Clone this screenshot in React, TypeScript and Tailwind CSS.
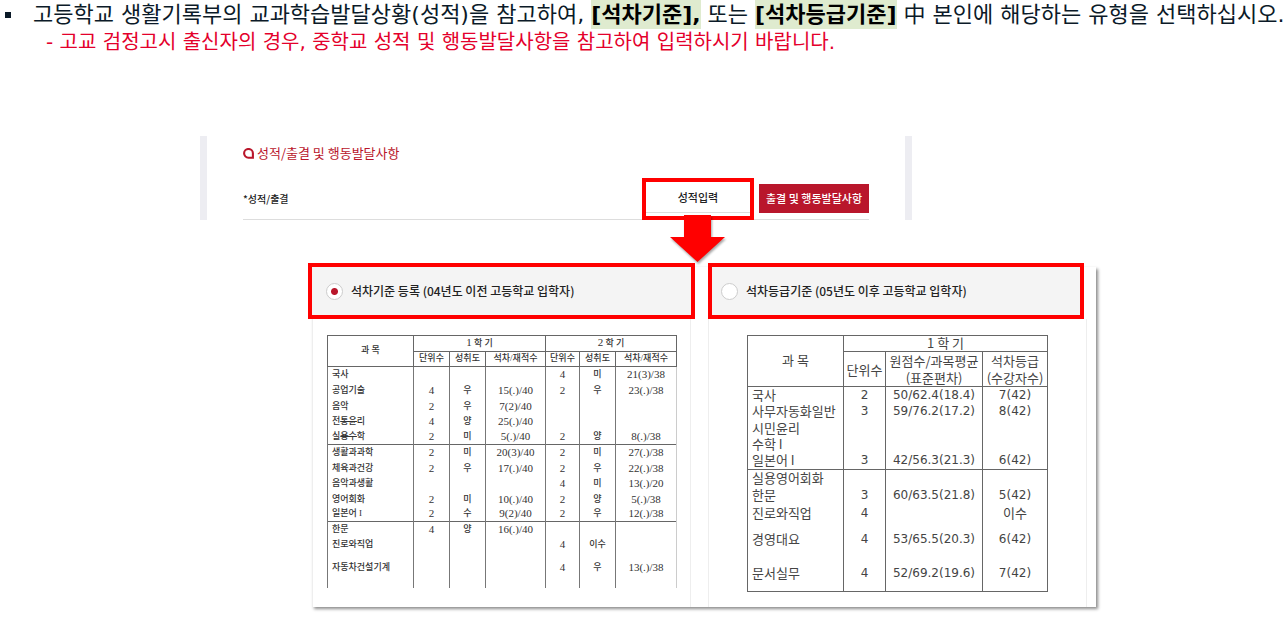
import { useState } from 'react'

type Row = { h: string; cells: string[]; line?: boolean; strike?: boolean }

const rankRows: Row[] = [
  { h: 'h-4', cells: ['국사', '', '', '', '4', '미', '21(3)/38'] },
  { h: 'h-4', cells: ['공업기술', '4', '우', '15(.)/40', '2', '우', '23(.)/38'] },
  { h: 'h-[15px]', cells: ['음악', '2', '우', '7(2)/40', '', '', ''] },
  { h: 'h-4', cells: ['전통윤리', '4', '양', '25(.)/40', '', '', ''], strike: true },
  { h: 'h-[15px]', cells: ['실용수학', '2', '미', '5(.)/40', '2', '양', '8(.)/38'], line: true, strike: true },
  { h: 'h-4', cells: ['생활과과학', '2', '미', '20(3)/40', '2', '미', '27(.)/38'] },
  { h: 'h-[15px]', cells: ['체육과건강', '2', '우', '17(.)/40', '2', '우', '22(.)/38'] },
  { h: 'h-4', cells: ['음악과생활', '', '', '', '4', '미', '13(.)/20'] },
  { h: 'h-[15px]', cells: ['영어회화', '2', '미', '10(.)/40', '2', '양', '5(.)/38'] },
  { h: 'h-[15px]', cells: ['일본어 I', '2', '수', '9(2)/40', '2', '우', '12(.)/38'], line: true },
  { h: 'h-[15px]', cells: ['한문', '4', '양', '16(.)/40', '', '', ''] },
  { h: 'h-4', cells: ['진로와직업', '', '', '', '4', '이수', ''] },
  { h: 'h-[30px]', cells: ['자동차건설기계', '', '', '', '4', '우', '13(.)/38'] },
  { h: 'h-[5px]', cells: ['', '', '', '', '', '', ''] },
]

const gradeRows: Row[] = [
  { h: 'h-[17px]', cells: ['국사', '2', '50/62.4(18.4)', '7(42)'] },
  { h: 'h-4', cells: ['사무자동화일반', '3', '59/76.2(17.2)', '8(42)'] },
  { h: 'h-[17px]', cells: ['시민윤리', '', '', ''] },
  { h: 'h-4', cells: ['수학 I', '', '', ''] },
  { h: 'h-[17px]', cells: ['일본어 I', '3', '42/56.3(21.3)', '6(42)'], line: true },
  { h: 'h-[17px]', cells: ['실용영어회화', '', '', ''] },
  { h: 'h-[17px]', cells: ['한문', '3', '60/63.5(21.8)', '5(42)'] },
  { h: 'h-[19px]', cells: ['진로와직업', '4', '', '이수'] },
  { h: 'h-[34px]', cells: ['경영대요', '4', '53/65.5(20.3)', '6(42)'] },
  { h: 'h-[35px]', cells: ['문서실무', '4', '52/69.2(19.6)', '7(42)'], line: true },
]

// 석차기준 성적표 (1, 2학기)
function RankTable() {
  const th = 'border border-[#666] p-0 pb-px font-medium'
  return (
    <table className="w-full table-fixed border-collapse whitespace-nowrap font-['Liberation_Serif','Noto_Sans_CJK_KR',serif] text-[9px] leading-[13px] font-medium text-[#333]">
      <colgroup>
        <col />
        <col className="w-[36px]" />
        <col className="w-[36px]" />
        <col className="w-[60px]" />
        <col className="w-[34px]" />
        <col className="w-[36px]" />
        <col className="w-[61px]" />
      </colgroup>
      <thead>
        <tr className="h-[15px]">
          <th rowSpan={2} className={th}>과 목</th>
          <th colSpan={3} className={th}><span className="text-[11px]">1</span> 학 기</th>
          <th colSpan={3} className={th}><span className="text-[11px]">2</span> 학 기</th>
        </tr>
        <tr className="h-[15px]">
          <th className={th}>단위수</th>
          <th className={th}>성취도</th>
          <th className={th}>석차/재적수</th>
          <th className={th}>단위수</th>
          <th className={th}>성취도</th>
          <th className={th}>석차/재적수</th>
        </tr>
      </thead>
      <tbody>
        {rankRows.map((row, i) => (
          <tr key={i} className={`${row.h} ${row.line ? 'border-b border-[#666]' : ''}`}>
            {row.cells.map((cell, j) => (
              <td
                key={j}
                className={`border-x border-[#777] p-0 ${j === 0 ? 'pl-1' : 'text-center'} ${/\d/.test(cell) ? 'text-[11px]' : ''} ${j === 6 ? 'border-r-[#ccc]' : ''}`}
              >
                {j === 0 && row.strike ? <>{cell[0]}<s>{cell.slice(1, 3)}</s>{cell[3]}</> : cell}
              </td>
            ))}
          </tr>
        ))}
      </tbody>
    </table>
  )
}

// 석차등급기준 성적표
function GradeTable() {
  const th = 'border border-[#666] p-0 font-normal'
  return (
    <table className="w-full table-fixed border-collapse whitespace-nowrap font-['Noto_Sans_CJK_KR',sans-serif] text-[13px] leading-[13px] text-[#444]">
      <colgroup>
        <col />
        <col className="w-[42px]" />
        <col className="w-[97px]" />
        <col className="w-[65px]" />
      </colgroup>
      <thead>
        <tr className="h-4">
          <th rowSpan={2} className={`${th} pb-1`}>과 목</th>
          <th colSpan={3} className={`${th} pb-0.5`}>1 학 기</th>
        </tr>
        <tr className="h-[35px]">
          <th className={th}>단위수</th>
          <th className={`${th} leading-[17px]`}>원점수/과목평균<br />(표준편차)</th>
          <th className={`${th} leading-[17px]`}>석차등급<br />(수강자수)</th>
        </tr>
      </thead>
      <tbody>
        {gradeRows.map((row) => (
          <tr key={row.cells[0]} className={`${row.h} ${row.line ? 'border-b border-[#666]' : ''}`}>
            {row.cells.map((cell, j) => (
              <td
                key={j}
                className={`border-x border-[#666] p-0 ${j === 0 ? 'pl-1' : 'text-center'} ${/\d/.test(cell) ? "font-['DejaVu_Sans',sans-serif] text-xs leading-[15px]" : 'pb-0.5'}`}
              >
                {cell}
              </td>
            ))}
          </tr>
        ))}
      </tbody>
    </table>
  )
}

interface TypeOptionProps {
  label: string
  checked: boolean
  onSelect: () => void
}

function TypeOption({ label, checked, onSelect }: TypeOptionProps) {
  return (
    <label className="flex h-12 items-center gap-2 bg-[#f4f4f4] text-xs font-medium text-[#222] whitespace-nowrap">
      <input
        type="radio"
        name="gradeType"
        checked={checked}
        onChange={onSelect}
        className="size-[17px] shrink-0 appearance-none rounded-full border border-[#ccc] bg-white checked:bg-[radial-gradient(circle,#b9162b_3px,#fff_4px)]"
      />
      {label}
    </label>
  )
}

export default function App() {
  const [type, setType] = useState('rank')

  return (
    <main className="bg-white font-['Noto_Sans_CJK_KR',sans-serif]">
      {/* 안내 문구 */}
      <header className="whitespace-nowrap font-['DejaVu_Sans','Noto_Sans_CJK_KR',sans-serif]">
        <div className="flex items-center pl-[5px]">
          <span className="mr-[22px] size-[6px] shrink-0 bg-[#0b1a28]" />
          <p className="text-[22px] leading-[29px] text-[#0b1a28]">
            고등학교 생활기록부의 교과학습발달상황(성적)을 참고하여,{' '}
            <strong className="inline-block bg-[#dfebcf] font-semibold text-black">[석차기준],</strong> 또는{' '}
            <strong className="inline-block bg-[#dfebcf] font-semibold text-black">[석차등급기준]</strong> 中 본인에 해당하는 유형을 선택하십시오.
          </p>
        </div>
        <p className="pl-[46px] text-[20px] leading-[26px] text-[#e4002b]">
          - 고교 검정고시 출신자의 경우, 중학교 성적 및 행동발달사항을 참고하여 입력하시기 바랍니다.
        </p>
      </header>

      {/* 성적/출결 입력 영역 */}
      <section className="mt-[81px] ml-[200px] max-w-[712px] border-x-[7px] border-[#ededf2] pr-9 pl-9">
        <h2 className="flex items-center gap-[3px] pt-[7px] text-[13px] leading-5 text-[#b9162b]">
          <svg className="size-[11px]" viewBox="0 0 11 11" fill="none" stroke="currentColor" strokeWidth="2.1">
            <path d="M1.1 5.2A4.4 4.2 0 0 1 9.9 5.2V9.7H5.5A4.4 4.4 0 0 1 1.1 5.2Z" />
          </svg>
          성적/출결 및 행동발달사항
        </h2>
        <div className="mt-[15px] flex h-[42px] items-center border-b border-[#ddd]">
          <span className="flex-1 text-[10px] font-medium text-[#222]">*성적/출결</span>
          <div className="relative mr-[5px]">
            <button type="button" className="flex h-[42px] w-[112px] flex-col border-4 border-[#f00] bg-white text-[11px] font-medium text-[#222]">
              <span className="w-full border-b border-[#ddd] leading-[30px]">성적입력</span>
            </button>
            <svg className="absolute top-[37px] left-[26px] h-[52px] w-[60px] drop-shadow-[1px_2px_1px_rgba(0,0,0,0.35)]" viewBox="0 0 60 52">
              <path d="M16 0H43V22H57L29.5 47L2 22H16Z" fill="#f00" />
            </svg>
          </div>
          <button type="button" className="h-[29px] w-[110px] bg-[#b9162b] text-[11px] font-medium text-white">
            출결 및 행동발달사항
          </button>
        </div>
      </section>

      {/* 유형 선택 카드 */}
      <section className="mt-[47px] mb-4 ml-[312px] flex max-w-[784px] gap-[17px] bg-white pr-[9px] shadow-[2px_2px_3px_rgba(0,0,0,0.45)]">
        <div className="flex-1">
          <div className="-mx-1 -mt-1 border-4 border-[#f00] pl-[14px] bg-[#f4f4f4]">
            <TypeOption label="석차기준 등록 (04년도 이전 고등학교 입학자)" checked={type === 'rank'} onSelect={() => setType('rank')} />
          </div>
          <div className="h-[288px] border-x border-[#eee] pr-[13px] pl-[14px] pt-4">
            <RankTable />
          </div>
        </div>
        <div className="flex-1">
          <div className="-mt-1 mr-[3px] border-4 border-[#f00] pl-[9px] bg-[#f4f4f4]">
            <TypeOption label="석차등급기준 (05년도 이후 고등학교 입학자)" checked={type === 'grade'} onSelect={() => setType('grade')} />
          </div>
          <div className="h-[288px] border-x border-[#eee] px-[38px] pt-4">
            <GradeTable />
          </div>
        </div>
      </section>
    </main>
  )
}
